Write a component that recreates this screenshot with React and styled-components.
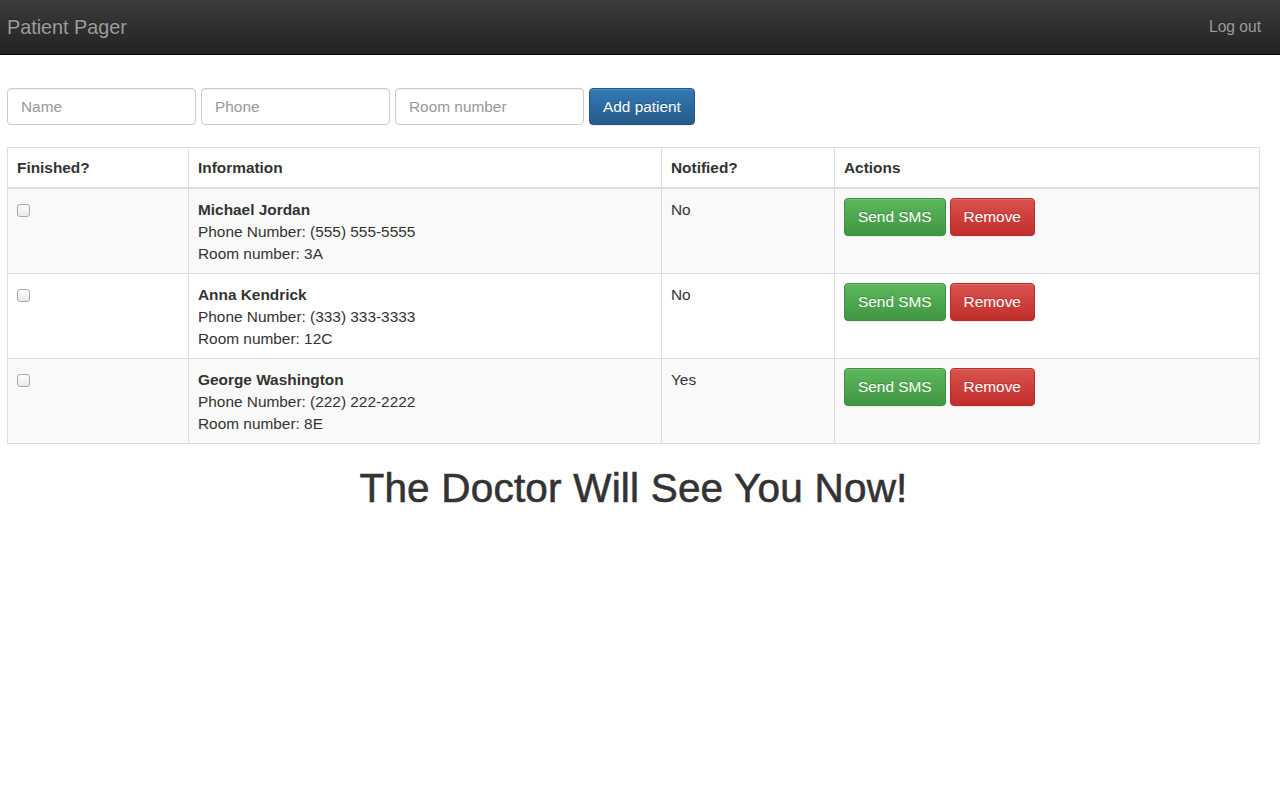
import React from 'react';
import styled, { createGlobalStyle } from 'styled-components';

const GlobalStyle = createGlobalStyle`
  html, body {
    margin: 0;
    padding: 0;
    background: #fff;
  }
  body {
    font-family: "Liberation Sans", Arial, sans-serif;
    font-size: 15.4px;
    line-height: 22px;
    color: #333;
  }
  * { box-sizing: border-box; }
`;

const patients = [
  { name: 'Michael Jordan', phone: '(555) 555-5555', room: '3A', notified: 'No' },
  { name: 'Anna Kendrick', phone: '(333) 333-3333', room: '12C', notified: 'No' },
  { name: 'George Washington', phone: '(222) 222-2222', room: '8E', notified: 'Yes' },
];

const Navbar = styled.nav`
  height: 55px;
  display: flex;
  align-items: center;
  justify-content: space-between;
  padding: 0 19px 0 7px;
  background-image: linear-gradient(to bottom, #3c3c3c 0%, #222 100%);
  border-bottom: 1px solid #080808;
`;

const Brand = styled.a`
  font-size: 19.8px;
  color: #9d9d9d;
  text-decoration: none;
  text-shadow: 0 -1px 0 rgba(0, 0, 0, 0.25);
  margin-top: -1px;
`;

const NavLink = styled.a`
  font-size: 15.6px;
  color: #9d9d9d;
  text-decoration: none;
  text-shadow: 0 -1px 0 rgba(0, 0, 0, 0.25);
`;

const Main = styled.main`
  padding: 33px 20px 0 7px;
`;

const Form = styled.form`
  display: flex;
  gap: 5px;
  margin-bottom: 22px;
`;

const Input = styled.input`
  width: 189px;
  height: 37px;
  padding: 6px 13px;
  font-family: inherit;
  font-size: 15.4px;
  color: #555;
  border: 1px solid #ccc;
  border-radius: 4px;
  box-shadow: inset 0 1px 1px rgba(0, 0, 0, 0.075);
  &::placeholder { color: #999; }
`;

const themes = {
  primary: { top: '#337ab7', bottom: '#265a88', border: '#245580' },
  success: { top: '#5cb85c', bottom: '#419641', border: '#3e8f3e' },
  danger: { top: '#d9534f', bottom: '#c12e2a', border: '#b92c28' },
};

const Button = styled.button`
  height: ${p => p.$h || 37}px;
  padding: 0 13px;
  font-family: inherit;
  font-size: 15.4px;
  color: #fff;
  border: 1px solid ${p => themes[p.$kind].border};
  border-radius: 4px;
  background-image: linear-gradient(to bottom, ${p => themes[p.$kind].top} 0%, ${p => themes[p.$kind].bottom} 100%);
  text-shadow: 0 -1px 0 rgba(0, 0, 0, 0.2);
  box-shadow: inset 0 1px 0 rgba(255, 255, 255, 0.15), 0 1px 1px rgba(0, 0, 0, 0.075);
  cursor: pointer;
`;

const Table = styled.table`
  width: 100%;
  border-collapse: collapse;
  border: 1px solid #ddd;
`;

const Th = styled.th`
  text-align: left;
  font-weight: bold;
  padding: 9px 9px 8px;
  border: 1px solid #ddd;
  border-bottom-width: 2px;
  width: ${p => p.$w || 'auto'};
`;

const Row = styled.tr`
  background: ${p => (p.$striped ? '#f9f9f9' : '#fff')};
  height: 85px;
`;

const Td = styled.td`
  vertical-align: top;
  padding: 10px 9px 8px;
  border: 1px solid #ddd;
`;

const Check = styled.input`
  appearance: none;
  width: 13px;
  height: 13px;
  margin: 5px 0 0 0;
  border: 1px solid #a9a9a9;
  border-radius: 3px;
  background-image: linear-gradient(to bottom, #fff, #e9e9e9);
`;

const Actions = styled.div`
  display: flex;
  gap: 4px;
  margin-top: -1px;
`;

const Heading = styled.h1`
  text-align: center;
  font-size: 40.5px;
  font-weight: 500;
  line-height: 44px;
  margin: 22px 0 0;
  color: #333;
  -webkit-text-stroke: 0.6px #333;
  letter-spacing: 0.2px;
`;

export default function App() {
  return (
    <>
      <GlobalStyle />
      <Navbar>
        <Brand href="#">Patient Pager</Brand>
        <NavLink href="#">Log out</NavLink>
      </Navbar>
      <Main>
        <Form onSubmit={e => e.preventDefault()}>
          <Input placeholder="Name" />
          <Input placeholder="Phone" />
          <Input placeholder="Room number" />
          <Button $kind="primary" type="submit">Add patient</Button>
        </Form>
        <Table>
          <thead>
            <tr>
              <Th $w="181px">Finished?</Th>
              <Th $w="473px">Information</Th>
              <Th $w="173px">Notified?</Th>
              <Th>Actions</Th>
            </tr>
          </thead>
          <tbody>
            {patients.map((p, i) => (
              <Row key={p.name} $striped={i % 2 === 0}>
                <Td><Check type="checkbox" /></Td>
                <Td>
                  <strong>{p.name}</strong><br />
                  Phone Number: {p.phone}<br />
                  Room number: {p.room}
                </Td>
                <Td>{p.notified}</Td>
                <Td>
                  <Actions>
                    <Button $kind="success" $h={38}>Send SMS</Button>
                    <Button $kind="danger" $h={38}>Remove</Button>
                  </Actions>
                </Td>
              </Row>
            ))}
          </tbody>
        </Table>
        <Heading>The Doctor Will See You Now!</Heading>
      </Main>
    </>
  );
}
